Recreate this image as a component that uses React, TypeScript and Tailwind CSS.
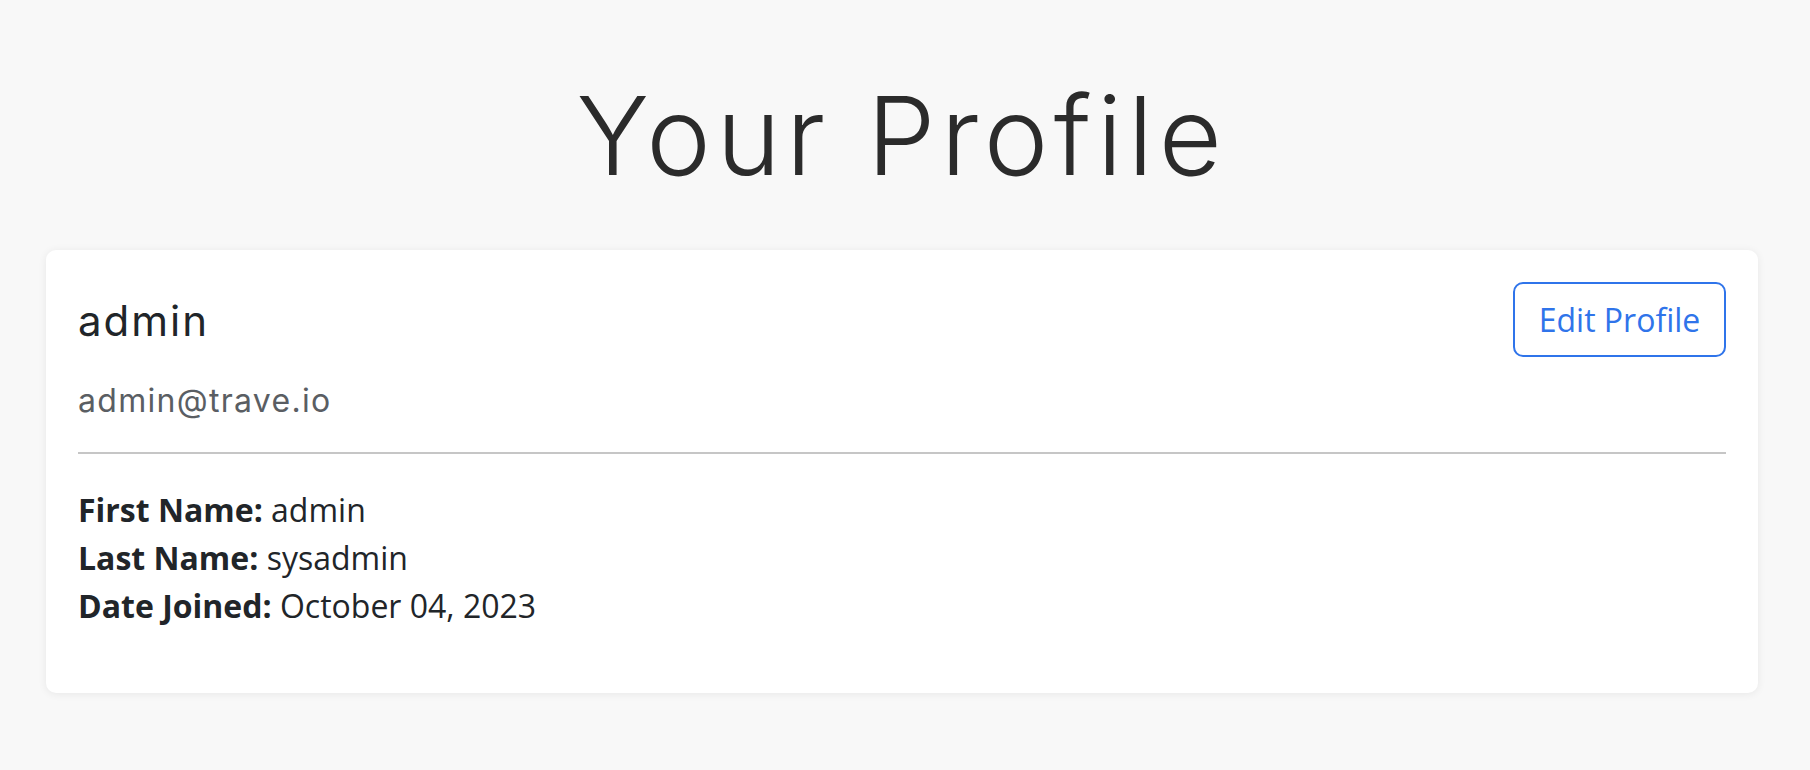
import React from 'react';

const details = [
  { label: 'First Name:', value: 'admin' },
  { label: 'Last Name:', value: 'sysadmin' },
  { label: 'Date Joined:', value: 'October 04, 2023' },
];

const App: React.FC = () => {
  return (
    <div className="min-h-screen w-full bg-[#f8f8f8] text-[#212529]">
      <main className="ml-[46px] mr-[52px] pt-[81px] pb-[76px]">
        {/* Page title */}
        <h1 className="text-center font-['Inter',sans-serif] font-light text-[109px] leading-none tracking-[5.5px] text-[#2b2b2b]">
          Your Profile
        </h1>

        {/* Profile card */}
        <div className="mt-[60px] rounded-[10px] bg-white px-[32px] pt-[32px] pb-[63px] shadow-[0_1px_8px_rgba(0,0,0,0.07)]">
          <div className="flex items-start justify-between">
            <div className="pt-[15px] font-['Inter',sans-serif]">
              <h2 className="text-[42px] leading-[48px] font-normal tracking-[2px] text-[#212529]">admin</h2>
              <p className="mt-[32px] text-[32px] leading-[47px] tracking-[1.3px] text-[#5a5e63]">admin@trave.io</p>
            </div>
            <button className="h-[75px] w-[213px] rounded-[10px] border-2 border-[#2f74ea] font-['Open_Sans',sans-serif] text-[32px] leading-none text-[#2f74ea]">
              Edit Profile
            </button>
          </div>

          <hr className="mt-[28px] border-0 h-[2px] bg-[#c6c6c6]" />

          <div className="mt-[32px] font-['Open_Sans',sans-serif] text-[32px] leading-[48px] text-[#212529]">
            {details.map((d) => (
              <div key={d.label}>
                <span className="font-bold">{d.label}</span> {d.value}
              </div>
            ))}
          </div>
        </div>
      </main>
    </div>
  );
};

export default App;
